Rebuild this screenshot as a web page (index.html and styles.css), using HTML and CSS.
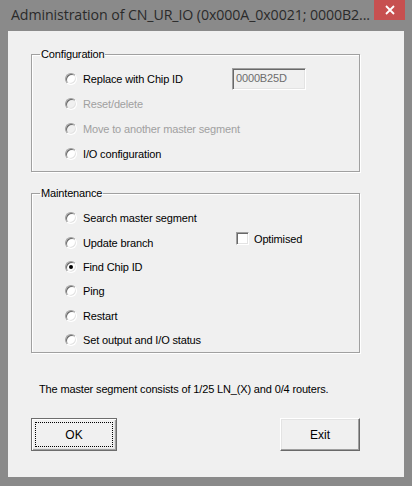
FILE: index.html
```html
<!DOCTYPE html>
<html lang="en">
<head>
  <meta charset="UTF-8">
  <title>Administration of CN_UR_IO</title>
  <link rel="stylesheet" href="styles.css">
</head>
<body>
  <div class="window">
    <div class="titlebar">
      <span class="title">Administration of CN_UR_IO (0x000A_0x0021; 0000B2...</span>
      <button class="close" aria-label="Close">
        <svg width="10" height="10" viewBox="0 0 10 10">
          <path d="M1 1 L9 9 M9 1 L1 9" stroke="#fff" stroke-width="1.8" fill="none"/>
        </svg>
      </button>
    </div>

    <div class="client">
      <fieldset class="group group-config">
        <legend>Configuration</legend>
        <div class="rows">
          <div class="row">
            <span class="radio"></span>
            <span class="label label-fixed">Replace with Chip ID</span>
            <span class="textbox">0000B25D</span>
          </div>
          <div class="row disabled">
            <span class="radio"></span>
            <span class="label">Reset/delete</span>
          </div>
          <div class="row disabled">
            <span class="radio"></span>
            <span class="label">Move to another master segment</span>
          </div>
          <div class="row">
            <span class="radio"></span>
            <span class="label">I/O configuration</span>
          </div>
        </div>
      </fieldset>

      <fieldset class="group group-maint">
        <legend>Maintenance</legend>
        <div class="maint">
          <div class="options">
            <div class="row row-m"><span class="radio"></span><span class="label">Search master segment</span></div>
            <div class="row row-m"><span class="radio"></span><span class="label">Update branch</span></div>
            <div class="row row-m"><span class="radio checked"></span><span class="label">Find Chip ID</span></div>
            <div class="row row-m"><span class="radio"></span><span class="label">Ping</span></div>
            <div class="row row-m"><span class="radio"></span><span class="label">Restart</span></div>
            <div class="row row-m"><span class="radio"></span><span class="label">Set output and I/O status</span></div>
          </div>
          <div class="side">
            <div class="check"><span class="checkbox"></span><span class="label">Optimised</span></div>
          </div>
        </div>
      </fieldset>

      <p class="status">The master segment consists of 1/25 LN_(X) and 0/4 routers.</p>

      <div class="buttons">
        <button class="btn btn-default"><span class="focus">OK</span></button>
        <button class="btn btn-exit">Exit</button>
      </div>
    </div>
  </div>
</body>
</html>
```

FILE: styles.css
```css
html, body {
  margin: 0;
  padding: 0;
}

body {
  font-family: "Liberation Sans", Arial, sans-serif;
  font-size: 11px;
  letter-spacing: -0.15px;
  color: #000;
  background: #888;
}

.window {
  width: 412px;
  height: 486px;
  box-sizing: border-box;
  background: #8a8a8a;
  padding: 0 8px 9px 8px;
  display: flex;
  flex-direction: column;
}

.titlebar {
  height: 31px;
  display: flex;
  align-items: flex-start;
  margin-left: -8px;
  margin-right: -8px;
}

.title {
  font-family: "Open Sans", "Noto Sans", sans-serif;
  font-size: 14.2px;
  color: #2a2a2a;
  padding-left: 11px;
  padding-top: 5px;
  white-space: nowrap;
  flex: 1;
  letter-spacing: -0.1px;
}

.close {
  width: 31px;
  height: 20px;
  margin-right: 7px;
  border: none;
  padding: 0;
  background: #c75050;
  display: flex;
  align-items: center;
  justify-content: center;
}

.client {
  flex: 1;
  background: #f0f0f0;
  padding: 17px 0 0 23px;
}

.group {
  margin: 0;
  padding: 0;
  width: 329px;
  box-sizing: border-box;
  min-inline-size: 0;
  border: 1px solid #a0a0a0;
  box-shadow: inset 1px 1px 0 #fff, 1px 1px 0 #fff;
}

.group legend {
  margin-left: 8px;
  padding: 0 1px;
  line-height: 13px;
  font-size: 11px;
}

.group-config {
  padding: 5px 0 5px 0;
}

.group-maint {
  margin-top: 15px;
  padding: 6px 0 0 0;
}

.rows,
.maint {
  padding-left: 33px;
}

.row {
  height: 25px;
  display: flex;
  align-items: center;
}

.row-m {
  height: 24.4px;
}

.label {
  white-space: nowrap;
}

.label-fixed {
  width: 149px;
}

.radio {
  width: 12px;
  height: 12px;
  box-sizing: border-box;
  border-radius: 50%;
  border: 1px solid;
  border-color: #a0a0a0 #fff #fff #a0a0a0;
  background: #fff;
  box-shadow: inset 1px 1px 0 #696969, inset -1px -1px 0 #e3e3e3;
  margin-right: 6px;
  flex-shrink: 0;
  position: relative;
}

.radio.checked::after {
  content: "";
  position: absolute;
  left: 3px;
  top: 3px;
  width: 4px;
  height: 4px;
  border-radius: 50%;
  background: #000;
}

.disabled .radio {
  background: #f0f0f0;
}

.disabled .label {
  color: #a0a0a0;
}

.textbox {
  width: 74px;
  height: 22px;
  box-sizing: border-box;
  border: 1px solid;
  border-color: #a0a0a0 #fff #fff #a0a0a0;
  box-shadow: inset 1px 1px 0 #696969, inset -1px -1px 0 #e3e3e3;
  background: #f0f0f0;
  color: #6d6d6d;
  padding: 3px 0 0 3px;
  font-size: 11px;
}

.maint {
  display: flex;
}

.options {
  width: 171px;
}

.side {
  padding-top: 26px;
}

.check {
  display: flex;
  align-items: center;
}

.checkbox {
  width: 13px;
  height: 13px;
  box-sizing: border-box;
  border: 1px solid;
  border-color: #a0a0a0 #fff #fff #a0a0a0;
  box-shadow: inset 1px 1px 0 #696969, inset -1px -1px 0 #e3e3e3;
  background: #fff;
  margin-right: 5px;
}

.status {
  margin: 30px 0 0 8px;
  line-height: 13px;
}

.buttons {
  display: flex;
  margin-top: 22px;
  width: 329px;
  justify-content: space-between;
}

.btn {
  height: 33px;
  font-family: "Liberation Sans", Arial, sans-serif;
  font-size: 12px;
  color: #000;
  background: #f0f0f0;
  border: 1px solid;
  border-color: #fff #696969 #696969 #fff;
  box-shadow: inset -1px -1px 0 #a0a0a0, inset 1px 1px 0 #e3e3e3;
  padding: 0;
}

.btn-default {
  width: 86px;
  border: 1px solid #6d6d6d;
  box-shadow: inset 1px 1px 0 #fff, inset -1px -1px 0 #a0a0a0, inset -2px -2px 0 #e3e3e3;
  padding: 3px;
}

.btn-default .focus {
  display: flex;
  align-items: center;
  justify-content: center;
  height: 100%;
  box-sizing: border-box;
  border: 1px dotted #000;
}

.btn-exit {
  width: 80px;
}
```
